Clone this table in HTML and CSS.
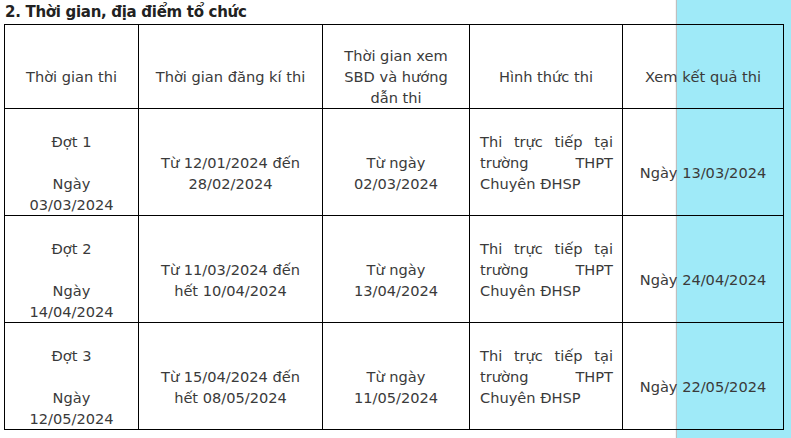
FILE: index.html
```html
<!DOCTYPE html>
<html lang="vi">
<head>
<meta charset="utf-8">
<link rel="stylesheet" href="styles.css">
</head>
<body>
<div class="highlight"></div>
<div class="page">
  <h2 class="title">2. Thời gian, địa điểm tổ chức</h2>
  <table class="schedule">
    <colgroup>
      <col class="c1"><col class="c2"><col class="c3"><col class="c4"><col class="c5">
    </colgroup>
    <tr class="head">
      <td class="lead">Thời gian thi</td>
      <td class="lead">Thời gian đăng kí thi</td>
      <td class="lead">Thời gian xem SBD và hướng dẫn thi</td>
      <td class="lead">Hình thức thi</td>
      <td class="lead">Xem kết quả thi</td>
    </tr>
    <tr class="row">
      <td class="lead">Đợt 1<br><br>Ngày 03/03/2024</td>
      <td class="lead">Từ 12/01/2024 đến 28/02/2024</td>
      <td class="lead">Từ ngày 02/03/2024</td>
      <td class="just">Thi trực tiếp tại trường THPT Chuyên ĐHSP</td>
      <td class="lead">Ngày 13/03/2024</td>
    </tr>
    <tr class="row">
      <td class="lead">Đợt 2<br><br>Ngày 14/04/2024</td>
      <td class="lead">Từ 11/03/2024 đến hết 10/04/2024</td>
      <td class="lead">Từ ngày 13/04/2024</td>
      <td class="just">Thi trực tiếp tại trường THPT Chuyên ĐHSP</td>
      <td class="lead">Ngày 24/04/2024</td>
    </tr>
    <tr class="row">
      <td class="lead">Đợt 3<br><br>Ngày 12/05/2024</td>
      <td class="lead">Từ 15/04/2024 đến hết 08/05/2024</td>
      <td class="lead">Từ ngày 11/05/2024</td>
      <td class="just">Thi trực tiếp tại trường THPT Chuyên ĐHSP</td>
      <td class="lead">Ngày 22/05/2024</td>
    </tr>
  </table>
</div>
</body>
</html>
```
FILE: styles.css
```css
html {
  background: #ffffff;
}
html, body {
  margin: 0;
  padding: 0;
}
body {
  position: relative;
  height: 438px;
  overflow: hidden;
  font-family: "DejaVu Sans", Verdana, sans-serif;
  color: #3a3a3a;
}
.highlight {
  position: absolute;
  top: 0;
  left: 677px;
  width: 114px;
  height: 438px;
  background: #9feaf8;
  box-shadow: -1px 0 1px rgba(0, 0, 0, 0.25);
  z-index: -1;
}
.page {
  padding: 0 0 0 4px;
}
.title {
  margin: 0;
  padding: 3px 0 0 1px;
  height: 24px;
  box-sizing: border-box;
  font-size: 15px;
  letter-spacing: -0.3px;
  line-height: 19px;
  font-weight: bold;
  color: #222222;
}
.schedule {
  border-collapse: collapse;
  width: 780px;
  font-size: 14.6px;
  line-height: 21px;
  background: transparent;
}
.c1 { width: 134px; }
.c2 { width: 184px; }
.c3 { width: 147px; }
.c4 { width: 153px; }
.c5 { width: 161px; }
.schedule td {
  border: 1px solid #000000;
  text-align: center;
  vertical-align: middle;
  padding: 0 10px;
}
.head td { height: 84px; box-sizing: border-box; }
.row td { height: 107px; box-sizing: border-box; }
.schedule td.lead { padding-top: 21px; }
.schedule .head td.lead { padding-top: 20px; }
.schedule td.just {
  text-align: justify;
  padding: 0 9px 0 10px;
}
```
